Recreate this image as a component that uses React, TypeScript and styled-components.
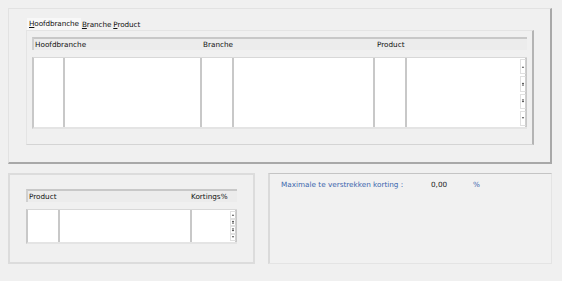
import React from "react";
import styled, { createGlobalStyle } from "styled-components";

const GlobalStyle = createGlobalStyle`
  html, body {
    margin: 0;
    padding: 0;
    background: #f0f0f0;
  }
  body {
    font-family: "DejaVu Sans", Verdana, sans-serif;
    font-size: 7.25px;
    color: #222;
  }
`;

const Page = styled.div`
  width: 562px;
  height: 281px;
  box-sizing: border-box;
  padding: 8px 0 0 8px;
  display: flex;
  flex-direction: column;
  gap: 9px;
  background: #f0f0f0;
  overflow: hidden;
`;

const TopPanel = styled.div`
  width: 544px;
  height: 156px;
  box-sizing: border-box;
  border-top: 1px solid #e2e2e2;
  border-left: 1px solid #e2e2e2;
  border-right: 2px solid #a8a8a8;
  border-bottom: 2px solid #a8a8a8;
  padding: 9px 16px 0 17px;
  display: flex;
  flex-direction: column;
`;

const TabStrip = styled.div`
  display: flex;
  height: 12px;
  align-items: flex-end;
  gap: 0;
  padding-left: 1px;
`;

const Tab = styled.div<{ $active?: boolean }>`
  height: ${({ $active }) => ($active ? "12px" : "11px")};
  padding: 0 ${({ $active }) => ($active ? "2px" : "1px")};
  display: flex;
  align-items: center;
  background: ${({ $active }) => ($active ? "#f8f8f8" : "transparent")};
  color: #111;
  line-height: 1;
  letter-spacing: -0.1px;
  u {
    text-decoration: underline;
  }
`;

const TabPane = styled.div`
  width: 508px;
  height: 115px;
  box-sizing: border-box;
  border-top: 1px solid #e4e4e4;
  border-left: 1px solid #e4e4e4;
  border-right: 2px solid #b4b4b4;
  border-bottom: 1px solid #d4d4d4;
  padding: 6px 0 0 5px;
  display: flex;
  flex-direction: column;
  gap: 7px;
`;

const HeaderRow = styled.div<{ $width: number }>`
  width: ${({ $width }) => $width}px;
  height: 13px;
  box-sizing: border-box;
  border-top: 2px solid #c8c8c8;
  border-left: 2px solid #d0d0d0;
  background: #ececec;
  display: flex;
  align-items: center;
`;

const HeaderCell = styled.div<{ $w: number }>`
  width: ${({ $w }) => $w}px;
  padding-left: 1px;
  flex: none;
  color: #111;
  line-height: 1;
`;

const DataArea = styled.div<{ $width: number; $height: number }>`
  width: ${({ $width }) => $width}px;
  height: ${({ $height }) => $height}px;
  box-sizing: border-box;
  background: #fff;
  border-left: 2px solid #c8c8c8;
  border-top: 1px solid #d8d8d8;
  border-bottom: 2px solid #e4e4e4;
  display: flex;
  position: relative;
`;

const Col = styled.div<{ $w: number }>`
  width: ${({ $w }) => $w}px;
  flex: none;
  border-right: 2px solid #c8c8c8;
  box-sizing: border-box;
  &:last-of-type {
    border-right: none;
  }
`;

const Scroller = styled.div<{ $gap: number }>`
  position: absolute;
  right: 1px;
  top: 1px;
  bottom: 1px;
  width: 6px;
  display: flex;
  flex-direction: column;
  gap: ${({ $gap }) => $gap}px;
`;

const ScrollBtn = styled.div`
  flex: 1;
  background: #fff;
  border: 1px solid #e0e0e0;
  border-right-color: #cfcfcf;
  display: flex;
  align-items: center;
  justify-content: center;
`;

const BottomRow = styled.div`
  display: flex;
  gap: 13px;
`;

const SubPanel = styled.div<{ $w: number }>`
  width: ${({ $w }) => $w}px;
  height: 91px;
  box-sizing: border-box;
  border: 1px solid #d8d8d8;
  border-top-color: #c8c8c8;
`;

const DiscountPanel = styled(SubPanel)`
  padding: 0 0 0 11px;
  border-left: 2px solid #dadada;
  border-top: 1px solid #c4c4c4;
  border-right: 1px solid #e4e4e4;
  border-bottom: 1px solid #e4e4e4;
  background: #f1f1f1;
`;

const ProductPanel = styled(SubPanel)`
  padding: 14px 0 0 16px;
  display: flex;
  flex-direction: column;
  gap: 7px;
  border-width: 2px;
  border-color: #dcdcdc;
`;

const InfoLine = styled.div`
  display: flex;
  align-items: center;
  height: 21px;
  color: #3b66ad;
`;

const InfoLabel = styled.span`
  width: 150px;
`;

const InfoValue = styled.span`
  width: 42px;
  color: #222;
`;

type Dir = "up" | "upup" | "downdown" | "down";

const Arrow: React.FC<{ dir: Dir }> = ({ dir }) => {
  const tri = (y: number, down: boolean) =>
    down ? `M1 ${y}h3l-1.5 2z` : `M2.5 ${y}l1.5 2h-3z`;
  let d = "";
  if (dir === "up") d = tri(1, false);
  if (dir === "down") d = tri(1, true);
  if (dir === "upup") d = tri(0, false) + tri(2, false);
  if (dir === "downdown") d = tri(0, true) + tri(2, true);
  return (
    <svg width="5" height="4" viewBox="0 0 5 4">
      <path d={d} fill="#333" />
    </svg>
  );
};

const ScrollBar: React.FC<{ gap: number }> = ({ gap }) => (
  <Scroller $gap={gap}>
    {(["up", "upup", "downdown", "down"] as Dir[]).map((d) => (
      <ScrollBtn key={d}>
        <Arrow dir={d} />
      </ScrollBtn>
    ))}
  </Scroller>
);

export default function App() {
  return (
    <>
      <GlobalStyle />
      <Page>
        <TopPanel>
          <TabStrip>
            <Tab $active>
              <span>
                <u>H</u>oofdbranche
              </span>
            </Tab>
            <Tab>
              <span>
                <u>B</u>ranche
              </span>
            </Tab>
            <Tab>
              <span>
                <u>P</u>roduct
              </span>
            </Tab>
          </TabStrip>
          <TabPane>
            <HeaderRow $width={495}>
              <HeaderCell $w={167}>Hoofdbranche</HeaderCell>
              <HeaderCell $w={173}>Branche</HeaderCell>
              <HeaderCell $w={150}>Product</HeaderCell>
            </HeaderRow>
            <DataArea $width={495} $height={72}>
              <Col $w={31} />
              <Col $w={137} />
              <Col $w={32} />
              <Col $w={141} />
              <Col $w={32} />
              <Col $w={120} />
              <ScrollBar gap={2} />
            </DataArea>
          </TabPane>
        </TopPanel>
        <BottomRow>
          <ProductPanel $w={247}>
            <HeaderRow $width={211}>
              <HeaderCell $w={161}>Product</HeaderCell>
              <HeaderCell $w={46}>Kortings%</HeaderCell>
            </HeaderRow>
            <DataArea $width={211} $height={35}>
              <Col $w={32} />
              <Col $w={132} />
              <Col $w={45} />
              <ScrollBar gap={0} />
            </DataArea>
          </ProductPanel>
          <DiscountPanel $w={284}>
            <InfoLine>
              <InfoLabel>Maximale te verstrekken korting :</InfoLabel>
              <InfoValue>0,00</InfoValue>
              <span>%</span>
            </InfoLine>
          </DiscountPanel>
        </BottomRow>
      </Page>
    </>
  );
}
